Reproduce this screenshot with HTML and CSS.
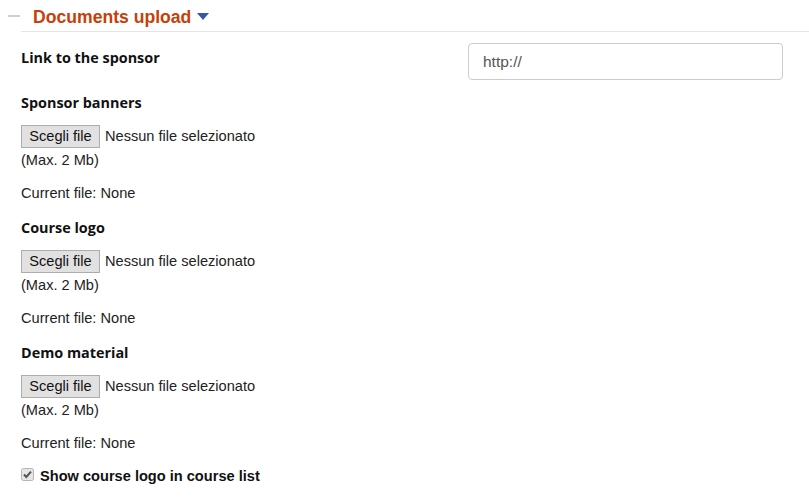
FILE: index.html
```html
<!DOCTYPE html>
<html lang="en">
<head>
    <meta charset="UTF-8">
    <title>Documents upload</title>
    <link rel="stylesheet" href="styles.css">
</head>
<body>
    <div class="section-head">
        <span class="dash"></span>
        <h2 class="legend">Documents upload</h2>
        <span class="caret"></span>
    </div>
    <div class="rule"></div>

    <div class="form">
        <div class="row">
            <label class="label first">Link to the sponsor</label>
            <input class="text-input" type="text" value="http://">
        </div>

        <div class="field">
            <div class="label">Sponsor banners</div>
            <div class="file-row">
                <button class="file-btn">Scegli file</button>
                <span class="file-name">Nessun file selezionato</span>
            </div>
            <div class="hint">(Max. 2 Mb)</div>
            <div class="current">Current file: None</div>
        </div>

        <div class="field">
            <div class="label">Course logo</div>
            <div class="file-row">
                <button class="file-btn">Scegli file</button>
                <span class="file-name">Nessun file selezionato</span>
            </div>
            <div class="hint">(Max. 2 Mb)</div>
            <div class="current">Current file: None</div>
        </div>

        <div class="field">
            <div class="label">Demo material</div>
            <div class="file-row">
                <button class="file-btn">Scegli file</button>
                <span class="file-name">Nessun file selezionato</span>
            </div>
            <div class="hint">(Max. 2 Mb)</div>
            <div class="current">Current file: None</div>
        </div>

        <div class="check-row">
            <span class="check">
                <svg width="13" height="13" viewBox="0 0 13 13">
                    <rect x="0.5" y="0.5" width="12" height="12" rx="2" fill="#e6e6e6" stroke="#b5b5b5"/>
                    <path d="M3 6.5 L5.3 9 L10 3.6" fill="none" stroke="#555" stroke-width="2"/>
                </svg>
            </span>
            <span class="check-label">Show course logo in course list</span>
        </div>
    </div>
</body>
</html>
```

FILE: styles.css
```css
body {
    margin: 0;
    font-family: "Liberation Sans", Arial, sans-serif;
    font-size: 14.6px;
    line-height: 20px;
    color: #222;
    background: #fff;
}
.section-head {
    display: flex;
    align-items: center;
    height: 31px;
    padding-left: 8px;
}
.dash {
    width: 12px;
    height: 2px;
    background-color: #cfcfcf;
    margin-right: 13px;
    margin-top: 1px;
}
.legend {
    margin: 0;
    font-size: 17.6px;
    font-weight: bold;
    line-height: 22px;
    color: #c64008;
    margin-top: 2px;
}
.caret {
    width: 0;
    height: 0;
    border-left: 6px solid transparent;
    border-right: 6px solid transparent;
    border-top: 7px solid #3358a8;
    margin-left: 6px;
    margin-top: 2px;
}
.rule {
    margin-left: 21px;
    height: 1px;
    background-color: #e5e5e5;
}
.form {
    padding-left: 21px;
}
.row {
    display: flex;
    align-items: flex-start;
    margin-top: 11px;
}
.label {
    font-family: "Open Sans", sans-serif;
    font-weight: bold;
    font-size: 14.4px;
    color: #111;
}
.label.first {
    width: 447px;
    margin-top: 5px;
}
.text-input {
    box-sizing: border-box;
    width: 315px;
    height: 37px;
    border: 1px solid #ccc;
    border-radius: 4px;
    padding: 0 14px;
    font-family: "Liberation Sans", Arial, sans-serif;
    font-size: 15.5px;
    color: #555;
}
.field {
    margin-top: 13px;
}
.field + .field {
    margin-top: 15px;
}
.file-row {
    display: flex;
    align-items: center;
    margin-top: 11px;
    height: 24px;
}
.file-btn {
    box-sizing: border-box;
    height: 23px;
    width: 79px;
    padding: 0;
    border: 1px solid #adadad;
    background-color: #e1e1e1;
    font-family: "Liberation Sans", Arial, sans-serif;
    font-size: 14.6px;
    color: #111;
}
.file-name {
    margin-left: 5px;
}
.hint {
    margin-top: 2px;
}
.current {
    margin-top: 13px;
}
.check-row {
    display: flex;
    align-items: center;
    margin-top: 13px;
}
.check {
    width: 13px;
    height: 13px;
    display: flex;
    margin-top: -3px;
}
.check-label {
    margin-left: 6px;
    font-weight: bold;
    color: #111;
}
```
